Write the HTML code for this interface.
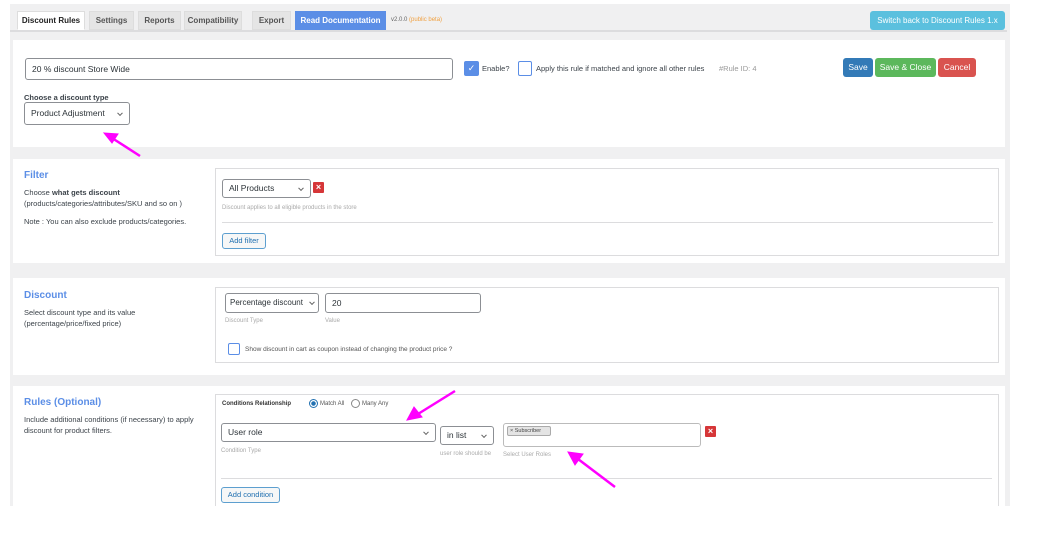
<!DOCTYPE html>
<html><head><meta charset="utf-8"><style>
*{box-sizing:border-box;margin:0;padding:0}
body{width:1049px;height:546px;background:#fff;font-family:"Liberation Sans",sans-serif;color:#3c434a;position:relative;overflow:hidden;font-size:8px}
.a{position:absolute}
.gray{left:10px;top:4px;width:1000px;height:502px;background:#f0f0f1}
.panel{background:#fff;left:13px;width:992px}
.tab{top:11px;height:19px;background:#e5e5e5;border:1px solid #ddd;font-weight:bold;font-size:8px;color:#555;line-height:17px;text-align:center}
.inp{border:1px solid #8c8f94;border-radius:3px;background:#fff;font-size:8.5px;color:#2c3338;padding-left:6px;white-space:nowrap;overflow:hidden}
.box{border:1px solid #dcdcde;background:#fff}
.h{color:#5b8ee6;font-weight:bold;font-size:10px}
.t{font-size:7.5px;color:#3c434a;line-height:11px}
.s{font-size:6px;color:#aaa}
.btn{color:#fff;font-size:8.5px;text-align:center;border-radius:3px;line-height:19px}
.chev{position:absolute;right:7px;top:50%;width:4px;height:4px;border-right:1px solid #666;border-bottom:1px solid #666;transform:translateY(-70%) rotate(45deg)}
.x{background:#d63638;color:#fff;width:11px;height:11px;font-size:9px;font-weight:bold;text-align:center;line-height:11px;border-radius:1px}
.ob{border:1px solid #5d9fcf;border-radius:3px;background:#f6f7f7;color:#2271b1;font-size:7.5px;text-align:center;line-height:14px}
</style></head><body>
<div class="a gray"></div>
<div class="a" style="left:10px;top:30px;width:997px;height:2px;background:#dcdcde"></div>
<div class="a tab" style="left:17px;width:68px;background:#fff;color:#222;border-bottom-color:#fff">Discount Rules</div>
<div class="a tab" style="left:89px;width:45px">Settings</div>
<div class="a tab" style="left:138px;width:43px">Reports</div>
<div class="a tab" style="left:184px;width:58px">Compatibility</div>
<div class="a tab" style="left:252px;width:39px">Export</div>
<div class="a tab" style="left:295px;width:91px;background:#5b8ee6;color:#fff;border-color:#5b8ee6">Read Documentation</div>
<div class="a" style="left:391px;top:17px;font-size:6px;color:#666">v2.0.0 <span style="color:#f0a040">(public beta)</span></div>
<div class="a btn" style="left:870px;top:11px;width:135px;height:19px;background:#5bc0de;font-size:8px">Switch back to Discount Rules 1.x</div>

<div class="a panel" style="top:40px;height:107px"></div>
<div class="a inp" style="left:25px;top:58px;width:428px;height:22px;line-height:20px">20 % discount Store Wide</div>
<div class="a" style="left:464px;top:61px;width:15px;height:15px;background:#5b8ee6;border-radius:2px;color:#fff;font-size:9px;text-align:center;line-height:15px">✓</div>
<div class="a t" style="left:482px;top:63px">Enable?</div>
<div class="a" style="left:518px;top:61px;width:14px;height:15px;border:1px solid #5b8ee6;border-radius:2px;background:#fff"></div>
<div class="a t" style="left:536px;top:63px">Apply this rule if matched and ignore all other rules</div>
<div class="a t" style="left:719px;top:63px;color:#999">#Rule ID: 4</div>
<div class="a btn" style="left:843px;top:58px;width:30px;height:19px;background:#337ab7">Save</div>
<div class="a btn" style="left:875px;top:58px;width:61px;height:19px;background:#5cb85c">Save &amp; Close</div>
<div class="a btn" style="left:938px;top:58px;width:38px;height:19px;background:#d9534f">Cancel</div>
<div class="a" style="left:24px;top:93px;font-size:7.5px;font-weight:bold">Choose a discount type</div>
<div class="a inp" style="left:24px;top:102px;width:106px;height:23px;line-height:21px">Product Adjustment<span class="chev"></span></div>

<div class="a panel" style="top:159px;height:104px"></div>
<div class="a h" style="left:24px;top:170px">Filter</div>
<div class="a t" style="left:24px;top:187px">Choose <b>what gets discount</b><br>(products/categories/attributes/SKU and so on )</div>
<div class="a t" style="left:24px;top:216px">Note : You can also exclude products/categories.</div>
<div class="a box" style="left:215px;top:168px;width:784px;height:88px"></div>
<div class="a inp" style="left:222px;top:179px;width:89px;height:19px;line-height:17px">All Products<span class="chev"></span></div>
<div class="a x" style="left:313px;top:182px">×</div>
<div class="a s" style="left:222px;top:205px">Discount applies to all eligible products in the store</div>
<div class="a" style="left:222px;top:222px;width:771px;height:1px;background:#dcdcde"></div>
<div class="a ob" style="left:222px;top:233px;width:44px;height:16px">Add filter</div>

<div class="a panel" style="top:278px;height:97px"></div>
<div class="a h" style="left:24px;top:290px">Discount</div>
<div class="a t" style="left:24px;top:307px">Select discount type and its value<br>(percentage/price/fixed price)</div>
<div class="a box" style="left:215px;top:287px;width:784px;height:76px"></div>
<div class="a inp" style="left:225px;top:293px;width:94px;height:20px;line-height:18px;font-size:8px;padding-left:4px">Percentage discount<span class="chev" style="right:4px;background:#fff"></span></div>
<div class="a inp" style="left:325px;top:293px;width:156px;height:20px;line-height:18px">20</div>
<div class="a s" style="left:225px;top:318px">Discount Type</div>
<div class="a s" style="left:325px;top:318px">Value</div>
<div class="a" style="left:228px;top:343px;width:12px;height:12px;border:1px solid #5b8ee6;border-radius:2px"></div>
<div class="a" style="left:245px;top:346px;font-size:6.5px;color:#555">Show discount in cart as coupon instead of changing the product price ?</div>

<div class="a panel" style="top:386px;height:120px"></div>
<div class="a h" style="left:24px;top:397px">Rules (Optional)</div>
<div class="a t" style="left:24px;top:414px">Include additional conditions (if necessary) to apply<br>discount for product filters.</div>
<div class="a box" style="left:215px;top:394px;width:784px;height:112px;border-bottom:none"></div>
<div class="a" style="left:222px;top:401px;font-size:6px;font-weight:bold;color:#333">Conditions Relationship</div>
<div class="a" style="left:309px;top:399px;width:9px;height:9px;border-radius:50%;border:1px solid #2271b1;background:radial-gradient(#2271b1 2px,#fff 2.5px)"></div>
<div class="a" style="left:320px;top:401px;font-size:6px;color:#555">Match All</div>
<div class="a" style="left:351px;top:399px;width:9px;height:9px;border-radius:50%;border:1px solid #888"></div>
<div class="a" style="left:362px;top:401px;font-size:6px;color:#555">Many Any</div>
<div class="a inp" style="left:221px;top:423px;width:215px;height:19px;line-height:17px">User role<span class="chev"></span></div>
<div class="a inp" style="left:440px;top:426px;width:54px;height:19px;line-height:17px">in list<span class="chev"></span></div>
<div class="a inp" style="left:503px;top:423px;width:198px;height:24px;border-color:#bbb"></div>
<div class="a" style="left:507px;top:426px;width:44px;height:10px;background:#e4e4e4;border:1px solid #aaa;border-radius:2px;font-size:5.5px;line-height:8px;padding-left:2px;color:#444">× Subscriber</div>
<div class="a x" style="left:705px;top:426px">×</div>
<div class="a s" style="left:221px;top:448px">Condition Type</div>
<div class="a s" style="left:440px;top:451px">user role should be</div>
<div class="a s" style="left:503px;top:452px">Select User Roles</div>
<div class="a" style="left:221px;top:478px;width:771px;height:1px;background:#dcdcde"></div>
<div class="a ob" style="left:221px;top:487px;width:59px;height:16px">Add condition</div>

<svg class="a" style="left:0;top:0" width="1049" height="546">
<g stroke="#f0f" stroke-width="2.5" fill="#f0f">
<line x1="140" y1="156" x2="112" y2="138"/><polygon points="104,133 118,134 112,143" stroke-width="1"/>
<line x1="455" y1="391" x2="418" y2="414"/><polygon points="407,420 414,407 422,417" stroke-width="1"/>
<line x1="615" y1="487" x2="578" y2="459"/><polygon points="568,452 583,454 575,465" stroke-width="1"/>
</g></svg>
</body></html>
